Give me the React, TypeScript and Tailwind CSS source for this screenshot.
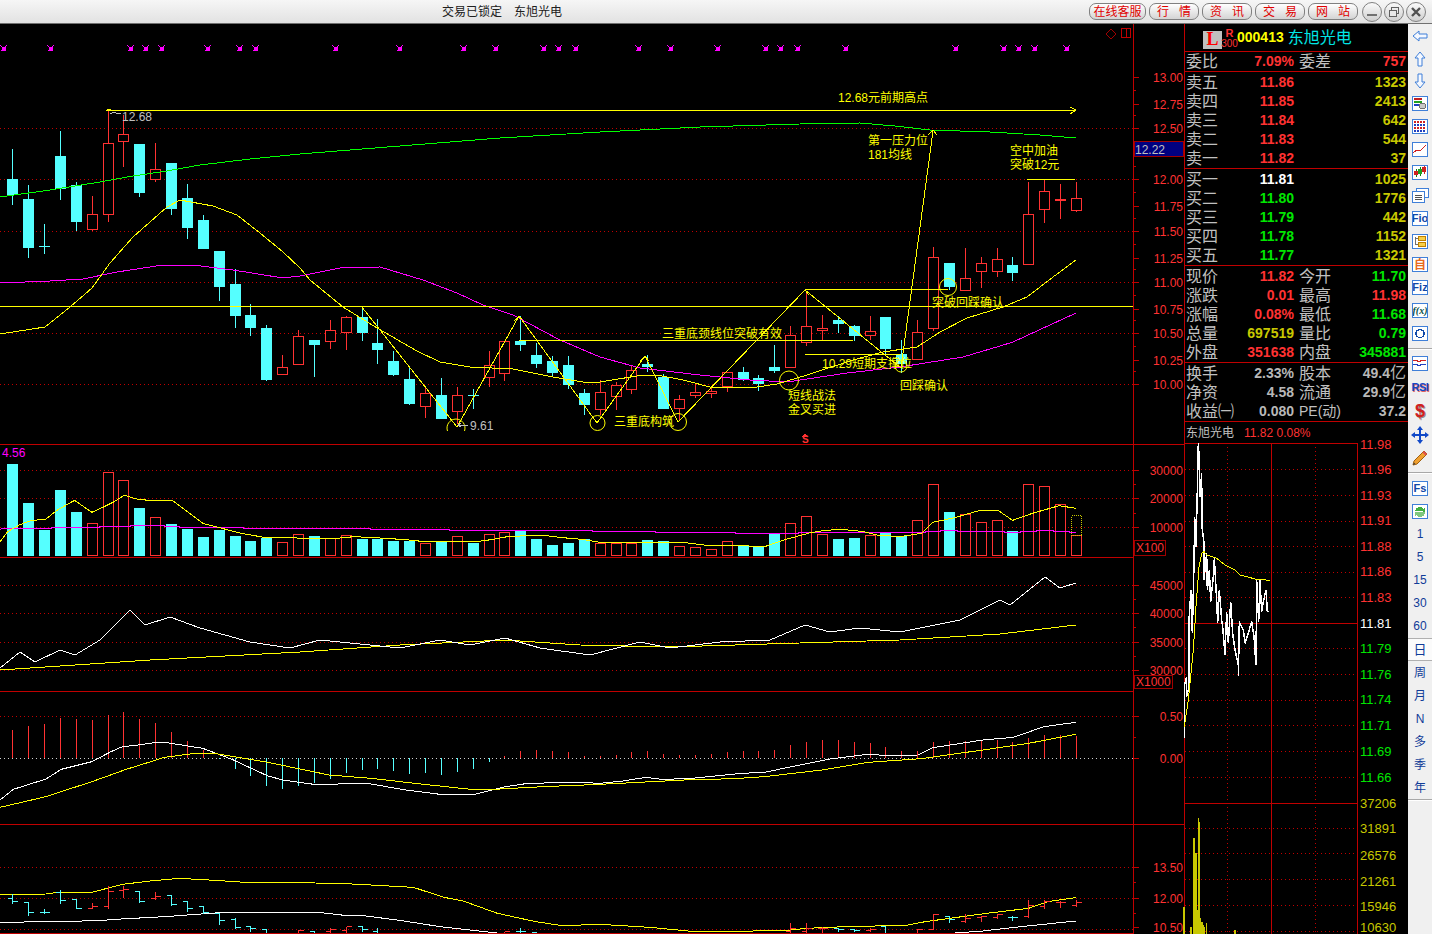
import type { ReactNode } from "react";

type Pt = number[];

const RED = "fill-[#ff3232]";
const YEL = "fill-[#ffff00]";
const GRAY = "fill-[#c0c0c0]";
const GREEN = "fill-[#00e600]";
const OLIVE = "fill-[#c8c800]";
const WHITE = "fill-[#ffffff]";
const MAG = "fill-[#ff00ff]";

const LINE_RED = "#c00000";
const CYAN = "#55ffff";
const CANDLE_RED = "#ff3232";

const X = (i: number) => Math.round(12.3 + 15.876 * i);
// points were read off 3x crops, so map them back to page pixels
const z = (pts: Pt[], ox: number, oy: number, sx = 3) =>
  pts.map(([a, b]) => [ox + a / sx, oy + b / 3]);
const S2 = 2.613;

// top, bottom, high, low, colour
const candles: [number, number, number, number, "c" | "r"][] = [
  [179, 195, 149, 205, "c"], [199, 248, 185, 258, "c"], [246, 247, 224, 254, "c"], [156, 189, 131, 200, "c"],
  [185, 222, 182, 231, "c"], [214, 230, 196, 231, "r"], [143, 215, 110, 222, "r"], [134, 142, 115, 167, "r"],
  [144, 193, 144, 197, "c"], [169, 180, 143, 182, "r"], [163, 209, 163, 215, "c"], [198, 228, 184, 239, "c"],
  [220, 249, 215, 249, "c"], [251, 287, 251, 301, "c"], [284, 316, 269, 328, "c"], [315, 328, 304, 336, "c"],
  [328, 380, 325, 381, "c"], [367, 375, 355, 375, "r"], [336, 365, 330, 365, "r"], [340, 345, 340, 377, "c"],
  [330, 342, 320, 349, "r"], [317, 333, 316, 350, "r"], [317, 333, 306, 341, "c"], [343, 350, 319, 364, "c"],
  [361, 375, 351, 376, "c"], [379, 404, 367, 405, "c"], [393, 407, 387, 418, "r"], [395, 419, 378, 419, "c"],
  [395, 412, 387, 424, "r"], [395, 396, 389, 409, "c"], [365, 378, 351, 387, "r"], [341, 374, 341, 381, "r"],
  [341, 345, 316, 351, "c"], [355, 364, 343, 368, "c"], [361, 373, 356, 376, "c"], [365, 385, 356, 389, "c"],
  [393, 405, 389, 415, "c"], [392, 410, 380, 415, "r"], [385, 397, 382, 410, "r"], [370, 390, 365, 394, "r"],
  [364, 367, 355, 372, "c"], [377, 409, 374, 409, "c"], [399, 409, 395, 420, "r"], [392, 396, 383, 398, "r"],
  [391, 394, 386, 398, "r"], [372, 387, 372, 392, "r"], [372, 380, 367, 381, "c"], [378, 384, 375, 391, "c"],
  [367, 371, 345, 373, "c"], [335, 368, 326, 368, "r"], [326, 343, 291, 346, "r"], [328, 331, 315, 340, "r"],
  [320, 324, 316, 333, "c"], [326, 336, 325, 341, "c"], [331, 336, 316, 340, "r"], [317, 349, 317, 355, "c"],
  [354, 364, 340, 373, "c"], [332, 360, 320, 360, "r"], [257, 329, 247, 331, "r"], [263, 287, 263, 290, "c"],
  [278, 291, 248, 291, "r"], [263, 272, 257, 288, "r"], [259, 272, 248, 277, "r"], [265, 273, 257, 281, "c"],
  [214, 265, 182, 265, "r"], [191, 210, 180, 223, "r"], [199, 201, 184, 219, "r"], [198, 211, 182, 212, "r"],
];

const volTops = [
  464, 503, 530, 490, 512, 523, 472, 480, 508, 517, 524, 529, 537, 530, 536, 541, 538, 542, 534, 536, 538, 535, 539,
  539, 541, 541, 543, 542, 536, 543, 534, 532, 531, 539, 545, 543, 539, 543, 543, 543, 540, 541, 546, 547, 549, 541,
  545, 546, 534, 523, 516, 534, 539, 538, 535, 533, 536, 520, 484, 512, 514, 522, 520, 531, 484, 486, 504, 535,
];
const volRed = new Set([5, 6, 7, 9, 17, 18, 20, 21, 26, 28, 30, 31, 37, 38, 39, 42, 43, 44, 45, 49, 50, 51, 54, 57, 58, 60, 61, 62, 64, 65, 66, 67]);

const green: Pt[] = [[0, 197], [50, 190], [100, 182], [133, 176], [167, 171], [200, 165], [250, 159], [300, 154], [400, 146], [500, 138], [600, 132], [700, 127], [800, 124], [860, 123], [895, 126], [930, 130], [990, 132], [1040, 135], [1076, 138]];
const maYellow: Pt[] = [[0, 334], [45, 327], [70, 307], [92, 288], [110, 263], [133, 237], [167, 207], [180, 200], [213, 206], [237, 215], [260, 233], [283, 252], [300, 268], [310, 280], [343, 307], [377, 328], [417, 351], [440, 362], [470, 367], [513, 369], [553, 377], [583, 382], [600, 382], [643, 375], [657, 375], [683, 380], [710, 387], [757, 387], [777, 384], [807, 375], [853, 360], [883, 352], [917, 347], [940, 332], [967, 318], [1003, 307], [1027, 297], [1053, 277], [1076, 260]];
const maMagenta: Pt[] = [[0, 283], [50, 281], [83, 279], [117, 272], [163, 265], [193, 265], [233, 270], [283, 278], [300, 276], [340, 268], [380, 267], [423, 280], [457, 293], [483, 305], [513, 315], [560, 340], [600, 357], [640, 368], [700, 375], [750, 380], [787, 382], [847, 373], [900, 367], [963, 357], [1000, 346], [1013, 342], [1076, 313]];
const zigzag: Pt[] = [[361, 306], [457, 427], [519, 316], [597, 423], [645, 356], [678, 422], [805, 290], [901, 368], [933, 131]];
const marks = [3, 50, 130, 145, 161, 207, 239, 255, 335, 399, 463, 495, 543, 558, 575, 638, 670, 717, 765, 780, 797, 845, 955, 1003, 1018, 1034, 1066];

const volYellow: Pt[] = [
  ...z([[0, 305], [20, 275], [50, 255], [80, 242], [120, 237], [150, 210], [195, 181], [240, 217], [265, 204], [295, 187], [325, 166], [360, 178], [390, 181], [450, 181], [490, 215], [530, 250], [580, 265], [630, 280], [690, 292], [760, 293], [810, 296], [880, 295], [925, 290], [1010, 295], [1080, 301], [1100, 304], [1250, 304], [1290, 298], [1330, 289], [1420, 286], [1470, 293], [1520, 298], [1568, 307]], 0, 440, S2),
  ...z([[100, 307], [145, 307], [230, 309], [280, 316], [350, 316], [430, 320], [480, 300], [550, 278], [590, 271], [630, 268], [690, 275], [730, 287], [790, 289], [840, 280], [870, 247], [930, 232], [990, 212], [1040, 211], [1078, 241], [1130, 220], [1200, 197], [1243, 205]], 600, 440, S2),
];
const volMagenta: Pt[] = [
  ...z([[0, 268], [10, 265], [135, 265], [135, 262], [260, 262], [260, 259], [340, 259], [340, 256], [430, 256], [430, 259], [470, 259], [470, 262], [635, 262], [635, 265], [968, 265], [968, 268], [1175, 268], [1175, 271], [1548, 271], [1548, 274], [1568, 274]], 0, 440, S2),
  ...z([[145, 274], [145, 277], [353, 277], [353, 280], [518, 280], [518, 277], [850, 277], [850, 274], [890, 274], [890, 271], [935, 271], [935, 274], [1058, 274], [1058, 277], [1100, 277], [1100, 274], [1140, 274], [1140, 271], [1185, 271], [1185, 274], [1228, 274], [1228, 277], [1243, 277]], 600, 440, S2),
];

const obvWhite: Pt[] = [[0, 668], [20, 652], [35, 662], [60, 650], [75, 655], [100, 640], [130, 610], [145, 625], [170, 617], [200, 628], [250, 642], [290, 648], [320, 640], [340, 642], [400, 648], [440, 640], [470, 645], [505, 638], [540, 648], [590, 655], [640, 642], [670, 648], [720, 642], [770, 640], [805, 625], [830, 632], [860, 628], [900, 632], [960, 620], [1000, 600], [1010, 605], [1045, 577], [1060, 588], [1076, 583]];
const obvYellow: Pt[] = [[0, 670], [150, 660], [300, 652], [400, 645], [505, 640], [580, 645], [670, 647], [800, 643], [900, 640], [1000, 634], [1076, 625]];

const macdBars = [730, 726, 724, 718, 719, 720, 715, 712, 719, 723, 732, 741, 750, 759, 769, 776, 786, 789, 786, 783, 779, 773, 770, 769, 771, 774, 773, 775, 772, 769, 762, 756, 751, 750, 751, 752, 756, 756, 755, 752, 751, 754, 755, 755, 754, 752, 751, 751, 750, 745, 742, 740, 740, 742, 743, 747, 751, 751, 742, 741, 741, 740, 740, 742, 738, 735, 735, 736];
const dif: Pt[] = [
  ...z([[0, 300], [35, 268], [120, 237], [160, 208], [240, 185], [290, 155], [320, 140], [360, 135], [410, 127], [430, 127], [530, 145], [610, 180], [700, 228], [740, 240], [820, 253], [880, 253], [890, 250], [960, 250], [1060, 270], [1150, 283], [1240, 283], [1320, 260], [1380, 250], [1510, 247], [1568, 250]], 0, 700, S2),
  ...z([[60, 243], [120, 232], [160, 238], [230, 236], [370, 220], [430, 217], [500, 200], [600, 177], [700, 163], [770, 168], [830, 165], [870, 143], [1000, 120], [1080, 112], [1160, 80], [1243, 67]], 600, 700, S2),
];
const dea: Pt[] = [
  ...z([[0, 322], [120, 290], [240, 245], [330, 208], [430, 172], [510, 160], [560, 160], [700, 187], [860, 225], [970, 235], [1100, 252], [1230, 268], [1290, 268], [1420, 260], [1568, 253]], 0, 700, S2),
  ...z([[220, 240], [350, 236], [430, 230], [580, 210], [700, 187], [840, 176], [1000, 150], [1120, 130], [1243, 103]], 600, 700, S2),
];
const lowYellow: Pt[] = [
  ...z([[0, 585], [120, 582], [150, 577], [240, 577], [320, 553], [400, 542], [470, 535], [560, 541], [640, 547], [760, 547], [920, 552], [1080, 562], [1160, 592], [1210, 603], [1300, 640], [1400, 665], [1470, 677], [1568, 673]], 0, 700, S2),
  ...z([[130, 682], [230, 693], [400, 693], [500, 690], [540, 685], [640, 680], [800, 676], [850, 665], [1010, 640], [1120, 625], [1170, 605], [1243, 593]], 600, 700, S2),
];
const lowWhite: Pt[] = z([[0, 667], [130, 665], [260, 662], [300, 658], [430, 650], [550, 640], [590, 637], [830, 637], [900, 646], [950, 647], [1050, 662], [1150, 680], [1290, 698], [1320, 702]], 0, 700, S2);
const lowWhite2: Pt[] = z([[890, 702], [1000, 693], [1100, 680], [1243, 663]], 600, 700, S2);

// index, high, low, open tick, close tick, colour - crop values
const ohlc: [number, number, number, number, number, "c" | "r"][] = [
  [0, 580, 610, 595, 604, "c"], [1, 603, 645, 606, 637, "c"], [2, 625, 640, 637, 637, "c"], [3, 568, 608, 577, 601, "c"],
  [4, 598, 625, 598, 623, "c"], [5, 606, 625, 625, 617, "r"], [6, 555, 623, 617, 574, "r"], [7, 556, 590, 571, 568, "r"],
  [8, 574, 607, 574, 604, "c"], [9, 574, 598, 594, 589, "r"], [10, 586, 616, 586, 613, "c"], [11, 602, 632, 604, 625, "c"],
  [12, 618, 638, 618, 637, "c"], [13, 640, 671, 640, 661, "c"], [14, 652, 685, 657, 680, "c"], [15, 676, 692, 678, 685, "c"],
  [16, 685, 702, 686, 700, "c"], [18, 688, 702, 702, 690, "r"], [19, 694, 702, 694, 698, "c"], [20, 682, 702, 692, 688, "r"],
  [21, 679, 702, 690, 679, "r"], [22, 678, 692, 678, 686, "c"], [23, 682, 702, 694, 700, "c"], [31, 694, 702, 702, 694, "r"],
  [32, 682, 702, 694, 694, "c"], [33, 696, 702, 696, 702, "c"], [49, 665, 702, 694, 685, "r"], [50, 665, 698, 694, 685, "r"],
  [51, 678, 695, 685, 685, "r"], [52, 684, 692, 684, 688, "c"], [53, 686, 692, 686, 690, "c"], [54, 682, 692, 690, 686, "r"],
  [55, 678, 702, 678, 702, "c"], [56, 698, 702, 698, 702, "c"], [57, 683, 702, 702, 686, "r"], [58, 640, 688, 686, 643, "r"],
  [59, 646, 665, 647, 658, "c"], [60, 640, 665, 664, 655, "r"], [61, 645, 662, 650, 648, "r"], [62, 640, 655, 652, 643, "r"],
  [63, 645, 660, 652, 652, "c"], [64, 597, 650, 648, 615, "r"], [65, 598, 623, 617, 602, "r"], [66, 600, 620, 606, 606, "r"],
  [67, 596, 617, 615, 607, "r"],
];

const dayPrice: Pt[] = z([[13, 955], [13, 795], [20, 770], [20, 830], [27, 800], [27, 600], [33, 510], [37, 640], [42, 430], [44, 290], [48, 380], [52, 210], [55, 70], [58, 120], [60, 230], [65, 160], [66, 320], [72, 370], [72, 480], [80, 400], [82, 510], [88, 450], [92, 545], [100, 470], [103, 415], [110, 540], [113, 610], [118, 510], [125, 600], [128, 620], [135, 705], [140, 575], [145, 670], [152, 545], [158, 640], [165, 690], [175, 735], [175, 768], [178, 608], [190, 630], [195, 670], [205, 640], [215, 605], [222, 650], [228, 735], [230, 480], [236, 605], [240, 480], [245, 575], [250, 545], [258, 510], [262, 575], [268, 575]], 1180, 420);
const dayAvg: Pt[] = z([[13, 920], [25, 840], [33, 760], [40, 690], [48, 560], [57, 440], [65, 400], [72, 395], [80, 405], [110, 415], [135, 435], [165, 450], [180, 465], [230, 478], [270, 481]], 1180, 420);
const dayVol: Pt[] = z([[12, 1460], [33, 1520], [42, 1255], [45, 1470], [48, 1300], [52, 1470], [55, 1195], [58, 1205], [62, 1495], [66, 1505], [70, 1515], [74, 1520], [80, 1510], [165, 1530]], 1180, 420);

const pts = (p: Pt[]) => p.map(([a, b]) => `${a},${b}`).join(" ");

function Line({ p, c, w = 1 }: { p: Pt[]; c: string; w?: number }) {
  return <polyline points={pts(p)} fill="none" stroke={c} strokeWidth={w} />;
}

function HL({ y, a = 0, b = 1133, c = "#ffff00" }: { y: number; a?: number; b?: number; c?: string }) {
  return <line x1={a} x2={b} y1={y + 0.5} y2={y + 0.5} stroke={c} />;
}

function Dots({ y, a = 0, b = 1133, c = "#c00000" }: { y: number; a?: number; b?: number; c?: string }) {
  return <line x1={a} x2={b} y1={y + 0.5} y2={y + 0.5} stroke={c} strokeDasharray="1 3" />;
}

function T({ x, y, c, end, size = "text-[12px]", children }: { x: number; y: number; c: string; end?: boolean; size?: string; children: ReactNode }) {
  return (
    <text x={x} y={y + 1} textAnchor={end ? "end" : "start"} dominantBaseline="central" className={`${c} ${size}`}>
      {children}
    </text>
  );
}

function Axis({ labels, minor = [] }: { labels: [string, number][]; minor?: number[] }) {
  return (
    <>
      {labels.map(([t, y]) => (
        <line key={t} x1={1133} x2={1139} y1={y + 0.5} y2={y + 0.5} stroke={LINE_RED} />
      ))}
      {minor.map((y) => (
        <line key={y} x1={1133} x2={1136} y1={y + 0.5} y2={y + 0.5} stroke={LINE_RED} />
      ))}
      {labels.map(([t, y]) => (
        <T key={t} x={1183} y={y} c={RED} end>
          {t}
        </T>
      ))}
    </>
  );
}

function Pane({ top, height, lineEnd = 1133, children }: { top: number; height: number; lineEnd?: number; children: ReactNode }) {
  const bottom = top + height - 0.5;
  return (
    <svg width={1185} height={height} viewBox={`0 ${top} 1185 ${height}`} shapeRendering="crispEdges" className="block">
      {children}
      <line x1={1133.5} x2={1133.5} y1={top} y2={top + height} stroke={LINE_RED} />
      <line x1={1184.5} x2={1184.5} y1={top} y2={top + height} stroke={LINE_RED} />
      <line x1={0} x2={lineEnd} y1={bottom} y2={bottom} stroke={LINE_RED} />
    </svg>
  );
}

function Chevron({ x, y }: { x: number; y: number }) {
  return <polyline points={`${x - 5},${y + 5} ${x},${y} ${x + 4},${y + 5}`} fill="none" stroke="#ffff00" />;
}

function MainPane() {
  return (
    <Pane top={24} height={421} lineEnd={1185}>
      {[128, 179, 231, 282, 333, 384].map((y) => (
        <Dots key={y} y={y} />
      ))}
      {marks.map((x) => (
        <g key={x} stroke="#ff00ff">
          <line x1={x - 2.5} x2={x + 3.5} y1={45.5} y2={51.5} />
          <line x1={x + 3.5} x2={x - 2.5} y1={45.5} y2={51.5} />
          <rect x={x - 1} y={47} width={3} height={3} fill="#ff00ff" />
        </g>
      ))}
      <polygon points="1106,34 1111,29 1116,34 1111,39" fill="none" stroke="#a00000" />
      <rect x={1121.5} y={28.5} width={9} height={9} fill="none" stroke="#c00000" />
      <line x1={1126.5} x2={1126.5} y1={28} y2={38} stroke="#c00000" />

      {candles.map(([top, bottom, hi, lo, kind], i) => {
        const x = X(i);
        const stroke = kind === "c" ? CYAN : CANDLE_RED;
        return (
          <g key={i}>
            <line x1={x + 0.5} x2={x + 0.5} y1={hi} y2={lo} stroke={stroke} />
            {kind === "c" ? (
              <rect x={x - 5} y={top} width={11} height={bottom - top} fill={CYAN} />
            ) : (
              <rect x={x - 4.5} y={top + 0.5} width={10} height={bottom - top - 1} fill="#000" stroke={CANDLE_RED} />
            )}
          </g>
        );
      })}

      <Line p={green} c="#00ff00" />
      <Line p={maMagenta} c="#ff00ff" />
      <Line p={maYellow} c="#ffff00" />
      <HL y={306} />
      <HL y={110} a={106} b={1076} />
      <polyline points="1070,107 1076,110 1070,114" fill="none" stroke="#ffff00" />
      <rect x={107} y={109} width={4} height={2} fill="#ffff00" />
      <Line p={zigzag} c="#ffff00" />
      <HL y={340} a={519} b={853} />
      <HL y={289} a={805} b={948} />
      <HL y={387} a={720} b={757} />
      <HL y={354} a={805} b={900} />
      <HL y={179} a={1027} b={1075} />
      <Chevron x={519} y={316} />
      <Chevron x={645} y={356} />
      <Chevron x={805} y={290} />
      <Chevron x={933} y={130} />

      <g fill="none" stroke="#ffff00" shapeRendering="auto">
        <path d="M447.5 431 A9 9 0 1 1 464.5 431" />
        <circle cx={597.5} cy={423} r={7.5} />
        <circle cx={678} cy={422} r={8.5} />
        <circle cx={789} cy={380.5} r={9.5} />
        <circle cx={948} cy={287} r={8.5} />
        <circle cx={901} cy={366} r={6} />
      </g>

      <T x={838} y={97} c={YEL}>12.68元前期高点</T>
      <T x={122} y={116} c={GRAY}>12.68</T>
      <polyline points="110,114 114,112 118,114 121,113" fill="none" stroke="#c0c0c0" />
      <T x={470} y={425} c={GRAY}>9.61</T>
      <polyline points="461,423 458,425 461,427" fill="none" stroke="#c0c0c0" />
      <line x1={459} x2={468} y1={425.5} y2={425.5} stroke="#c0c0c0" />
      <T x={868} y={140} c={YEL}>第一压力位</T>
      <T x={868} y={154} c={YEL}>181均线</T>
      <T x={1010} y={150} c={YEL}>空中加油</T>
      <T x={1010} y={164} c={YEL}>突破12元</T>
      <T x={662} y={333} c={YEL}>三重底颈线位突破有效</T>
      <T x={822} y={363} c={YEL}>10.29短期支撑位</T>
      <T x={932} y={302} c={YEL}>突破回踩确认</T>
      <T x={614} y={421} c={YEL}>三重底构筑</T>
      <T x={788} y={395} c={YEL}>短线战法</T>
      <T x={788} y={409} c={YEL}>金叉买进</T>
      <T x={900} y={385} c={YEL}>回踩确认</T>
      <polygon points="802,437 805,433 808,437" fill="#ff3232" />
      <T x={802} y={438} c={RED} size="text-[10px] font-bold">S</T>

      <Axis
        labels={[["13.00", 77], ["12.75", 104], ["12.50", 128], ["12.00", 179], ["11.75", 206], ["11.50", 231], ["11.25", 258], ["11.00", 282], ["10.75", 309], ["10.50", 333], ["10.25", 360], ["10.00", 384]]}
        minor={[90, 115, 141, 166, 192, 218, 244, 269, 295, 320, 346, 371]}
      />
      <rect x={1134.5} y={141.5} width={49} height={15} fill="#000080" stroke="#a00000" />
      <T x={1135} y={149} c={GRAY}>12.22</T>
    </Pane>
  );
}

function VolumePane() {
  return (
    <Pane top={445} height={113}>
      {[470, 498, 527].map((y) => (
        <Dots key={y} y={y} />
      ))}
      <T x={2} y={452} c={MAG}>4.56</T>
      {volTops.map((top, i) =>
        volRed.has(i) ? (
          <rect key={i} x={X(i) - 4.5} y={top + 0.5} width={10} height={555 - top} fill="#000" stroke={CANDLE_RED} />
        ) : (
          <rect key={i} x={X(i) - 5} y={top} width={11} height={556 - top} fill={CYAN} />
        ),
      )}
      <rect x={1071.5} y={515.5} width={10} height={20} fill="none" stroke="#c8c800" strokeDasharray="1 1" />
      <Line p={volMagenta} c="#ff00ff" />
      <Line p={volYellow} c="#ffff00" />
      <Axis labels={[["30000", 470], ["20000", 498], ["10000", 527]]} minor={[484, 513]} />
      <rect x={1134.5} y={540.5} width={31} height={15} fill="none" stroke="#a00000" />
      <T x={1136} y={547} c={RED}>X100</T>
    </Pane>
  );
}

function ObvPane() {
  return (
    <Pane top={558} height={134}>
      {[585, 613, 642, 670].map((y) => (
        <Dots key={y} y={y} />
      ))}
      <Line p={obvYellow} c="#ffff00" />
      <Line p={obvWhite} c="#ffffff" />
      <Axis labels={[["45000", 585], ["40000", 613], ["35000", 642], ["30000", 670]]} minor={[599, 627, 656]} />
      <rect x={1134.5} y={675.5} width={38} height={13} fill="#000" stroke="#a00000" />
      <T x={1136} y={681} c={RED}>X1000</T>
    </Pane>
  );
}

function MacdPane() {
  return (
    <Pane top={692} height={133} lineEnd={1185}>
      <Dots y={716} />
      <Dots y={758} a={0} b={1133} c="#d0d0d0" />
      {macdBars.map((top, i) => (
        <line key={i} x1={X(i) + 0.5} x2={X(i) + 0.5} y1={top} y2={758} stroke={top < 758 ? CANDLE_RED : CYAN} />
      ))}
      <Line p={dif} c="#ffffff" />
      <Line p={dea} c="#ffff00" />
      <Axis labels={[["0.50", 716], ["0.00", 758]]} minor={[737]} />
    </Pane>
  );
}

function BottomPane() {
  return (
    <Pane top={825} height={109}>
      {[867, 898, 929].map((y) => (
        <Dots key={y} y={y} />
      ))}
      <Line p={lowYellow} c="#ffff00" />
      <Line p={lowWhite} c="#ffffff" />
      <Line p={lowWhite2} c="#ffffff" />
      {ohlc.map(([i, hi, lo, open, close, kind]) => {
        const x = X(i) + 0.5;
        const c = kind === "c" ? CYAN : CANDLE_RED;
        const y = (v: number) => Math.round(700 + v / 3) + 0.5;
        return (
          <g key={i} stroke={c}>
            <line x1={x} x2={x} y1={y(hi)} y2={y(lo)} />
            <line x1={x - 5} x2={x} y1={y(open)} y2={y(open)} />
            <line x1={x} x2={x + 5} y1={y(close)} y2={y(close)} />
          </g>
        );
      })}
      <Axis labels={[["13.50", 867], ["12.00", 898], ["10.50", 927]]} minor={[882, 913]} />
    </Pane>
  );
}

function IntradayChart() {
  const dotted = [469, 495, 521, 546, 572, 597, 648, 674, 700, 725, 751, 777, 828, 853, 879, 905, 931];
  const labels: [string, number, string][] = [
    ["11.98", 443, RED], ["11.96", 468, RED], ["11.93", 494, RED], ["11.91", 519, RED], ["11.88", 545, RED],
    ["11.86", 570, RED], ["11.83", 596, RED], ["11.81", 622, WHITE], ["11.79", 647, GREEN], ["11.76", 673, GREEN],
    ["11.74", 698, GREEN], ["11.71", 724, GREEN], ["11.69", 750, GREEN], ["11.66", 776, GREEN], ["37206", 802, OLIVE],
    ["31891", 827, OLIVE], ["26576", 854, OLIVE], ["21261", 880, OLIVE], ["15946", 905, OLIVE], ["10630", 926, OLIVE],
  ];
  return (
    <svg width={223} height={491} viewBox="1185 443 223 491" shapeRendering="crispEdges" className="block overflow-visible">
      {dotted.map((y) => (
        <Dots key={y} y={y} a={1185} b={1357} />
      ))}
      {[1227, 1315].map((x) => (
        <line key={x} x1={x + 0.5} x2={x + 0.5} y1={443} y2={934} stroke="#c00000" strokeDasharray="1 3" />
      ))}
      <line x1={1185} x2={1357} y1={443.5} y2={443.5} stroke={LINE_RED} />
      <line x1={1185} x2={1357} y1={623.5} y2={623.5} stroke={LINE_RED} />
      <line x1={1185} x2={1357} y1={803.5} y2={803.5} stroke={LINE_RED} />
      <line x1={1271.5} x2={1271.5} y1={443} y2={934} stroke={LINE_RED} />
      <line x1={1357.5} x2={1357.5} y1={443} y2={934} stroke={LINE_RED} />
      {dayVol.map(([x, y]) => (
        <line key={x} x1={x} x2={x} y1={y} y2={934} stroke="#c8c800" strokeWidth={1.5} />
      ))}
      <Line p={dayPrice} c="#ffffff" w={1.5} />
      <Line p={dayAvg} c="#ffff00" />
      {labels.map(([t, y, c]) => (
        <T key={t} x={1360} y={y} c={c} size="text-[13px]">
          {t}
        </T>
      ))}
    </svg>
  );
}

const cRed = "text-[#ff3232]";
const cGreen = "text-[#00e600]";
const cOlive = "text-[#c8c800]";
const cWhite = "text-[#ffffff]";
const cGray = "text-[#b8b8b8]";

function Row({ l, v, vc, l2, v2, v2c }: { l: ReactNode; v: ReactNode; vc: string; l2?: ReactNode; v2: ReactNode; v2c: string }) {
  return (
    <div className="flex h-[19px] items-center leading-[19px]">
      <span className="w-[36px] shrink-0 whitespace-nowrap pl-[1px] text-[16px] text-[#c0c0c0]">{l}</span>
      <span className={`w-[73px] shrink-0 text-right text-[14px] font-bold ${vc}`}>{v}</span>
      <span className="ml-[5px] w-[48px] shrink-0 whitespace-nowrap text-[16px] text-[#c0c0c0]">{l2}</span>
      <span className={`flex-1 pr-[2px] text-right text-[14px] font-bold whitespace-nowrap ${v2c}`}>{v2}</span>
    </div>
  );
}

function QuotePanel() {
  const sell = [["卖五", "11.86", "1323"], ["卖四", "11.85", "2413"], ["卖三", "11.84", "642"], ["卖二", "11.83", "544"], ["卖一", "11.82", "37"]];
  const buy = [["买一", "11.81", "1025"], ["买二", "11.80", "1776"], ["买三", "11.79", "442"], ["买四", "11.78", "1152"], ["买五", "11.77", "1321"]];
  return (
    <div className="flex w-[223px] flex-col">
      <div className="flex h-[28px] items-center border-b border-[#c00000] pl-[18px]">
        <span className="mt-[4px] flex h-[18px] w-[19px] items-center justify-center bg-[#c0c0c0] font-['Liberation_Serif',serif] text-[18px] font-bold text-[#ff0000]">L</span>
        <span className="flex w-[15px] flex-col items-center text-[#ff3232]">
          <span className="text-[11px] leading-[11px] font-bold">R</span>
          <span className="text-[10px] leading-[9px]">300</span>
        </span>
        <span className="text-[14px] font-bold text-[#ffff00]">000413</span>
        <span className="ml-[4px] text-[16px] text-[#00e6e6]">东旭光电</span>
      </div>
      <div className="border-b border-[#c00000]">
        <Row l="委比" v="7.09%" vc={cRed} l2="委差" v2="757" v2c={cRed} />
      </div>
      <div className="border-b border-[#c00000] py-[0.5px]">
        {sell.map(([l, p, q]) => (
          <Row key={l} l={l} v={p} vc={cRed} v2={q} v2c={cOlive} />
        ))}
      </div>
      <div className="border-b border-[#c00000] py-[0.5px]">
        {buy.map(([l, p, q], i) => (
          <Row key={l} l={l} v={p} vc={i === 0 ? cWhite : cGreen} v2={q} v2c={cOlive} />
        ))}
      </div>
      <div className="border-b border-[#c00000] py-[0.5px]">
        <Row l="现价" v="11.82" vc={cRed} l2="今开" v2="11.70" v2c={cGreen} />
        <Row l="涨跌" v="0.01" vc={cRed} l2="最高" v2="11.98" v2c={cRed} />
        <Row l="涨幅" v="0.08%" vc={cRed} l2="最低" v2="11.68" v2c={cGreen} />
        <Row l="总量" v="697519" vc={cOlive} l2="量比" v2="0.79" v2c={cGreen} />
        <Row l="外盘" v="351638" vc={cRed} l2="内盘" v2="345881" v2c={cGreen} />
      </div>
      <div className="border-b border-[#c00000] py-[0.5px]">
        <Row l="换手" v="2.33%" vc={cGray} l2="股本" v2={<>49.4<span className="text-[16px] font-normal">亿</span></>} v2c={cGray} />
        <Row l="净资" v="4.58" vc={cGray} l2="流通" v2={<>29.9<span className="text-[16px] font-normal">亿</span></>} v2c={cGray} />
        <Row l="收益㈠" v="0.080" vc={cGray} l2={<span className="text-[14px]">PE(动)</span>} v2="37.2" v2c={cGray} />
      </div>
      <div className="flex h-[21px] items-center gap-[10px] pl-[1px] text-[12px] leading-none whitespace-nowrap">
        <span className="text-[#c0c0c0]">东旭光电</span>
        <span className="text-[#ff3232]">11.82 0.08%</span>
      </div>
      <IntradayChart />
    </div>
  );
}

function Tile({ children }: { children: ReactNode }) {
  return (
    <span className="flex h-[15px] w-[16px] items-center justify-center overflow-hidden border border-[#3f7fd8] bg-white text-[11px] leading-none font-bold text-[#1048a8]">
      {children}
    </span>
  );
}

function Arrow({ d }: { d: string }) {
  return (
    <svg width={18} height={18} viewBox="0 0 18 18">
      <path d={d} fill="#f4f8ff" stroke="#3f7fd8" strokeWidth={1} />
    </svg>
  );
}

function Mini({ children }: { children: ReactNode }) {
  return (
    <svg width={14} height={13} viewBox="0 0 14 13" shapeRendering="crispEdges">
      {children}
    </svg>
  );
}

function ToolSlot({ h = "h-[23px]", children, active }: { h?: string; children: ReactNode; active?: boolean }) {
  return (
    <div className={`flex w-[24px] items-center justify-center ${h} ${active ? "border-y border-[#b0b0b0] bg-[#fbfbfb]" : ""}`}>
      {children}
    </div>
  );
}

function Sep({ h }: { h: string }) {
  return (
    <div className={`flex w-[24px] items-center ${h}`}>
      <div className="h-[2px] w-full border-t border-[#a8a8a8] bg-white" />
    </div>
  );
}

function Toolbar() {
  const periods = ["1", "5", "15", "30", "60"];
  const after = ["周", "月", "N", "多", "季", "年"];
  return (
    <div className="flex w-[24px] flex-col bg-[#f0f0f0] text-[12px] leading-none text-[#103c98]">
      <ToolSlot><Arrow d="M2 9 L8 4 V7 H16 V11 H8 V14 Z" /></ToolSlot>
      <ToolSlot><Arrow d="M9 2 L14 8 H11 V16 H7 V8 H4 Z" /></ToolSlot>
      <ToolSlot h="h-[22px]"><Arrow d="M9 16 L14 10 H11 V2 H7 V10 H4 Z" /></ToolSlot>
      <ToolSlot>
        <Tile>
          <Mini>
            <rect x={1} y={1} width={8} height={2} fill="#c02020" />
            <rect x={1} y={4} width={8} height={2} fill="#20a020" />
            <rect x={1} y={7} width={5} height={2} fill="#2040c0" />
            <circle cx={9.5} cy={9} r={3} fill="#c8c8c8" stroke="#707070" />
          </Mini>
        </Tile>
      </ToolSlot>
      <ToolSlot>
        <Tile>
          <Mini>
            {[1, 4, 7, 10].map((x) => (
              <g key={x}>
                <rect x={x} y={1} width={2} height={2} fill="#d02020" />
                <rect x={x} y={4} width={2} height={2} fill="#2040c0" />
                <rect x={x} y={7} width={2} height={2} fill="#d02020" />
                <rect x={x} y={10} width={2} height={2} fill="#2040c0" />
              </g>
            ))}
          </Mini>
        </Tile>
      </ToolSlot>
      <ToolSlot>
        <Tile>
          <Mini>
            <polyline points="0,10 4,7 7,8 13,2" fill="none" stroke="#d02020" />
          </Mini>
        </Tile>
      </ToolSlot>
      <ToolSlot>
        <Tile>
          <Mini>
            <line x1={3} x2={3} y1={3} y2={11} stroke="#108010" />
            <rect x={1} y={5} width={4} height={4} fill="#d02020" />
            <line x1={7} x2={7} y1={1} y2={10} stroke="#108010" />
            <rect x={5} y={3} width={4} height={5} fill="#20a020" />
            <line x1={11} x2={11} y1={0} y2={8} stroke="#d02020" />
            <rect x={9} y={1} width={4} height={5} fill="#d02020" />
          </Mini>
        </Tile>
      </ToolSlot>
      <ToolSlot>
        <svg width={17} height={16} viewBox="0 0 17 16" shapeRendering="crispEdges">
          <rect x={4.5} y={0.5} width={12} height={9} fill="#fff" stroke="#3f7fd8" />
          <rect x={0.5} y={3.5} width={12} height={11} fill="#fff" stroke="#3f7fd8" />
          <path d="M3 7H10M3 9H10M3 11H10" stroke="#505050" />
        </svg>
      </ToolSlot>
      <ToolSlot><Tile>Fio</Tile></ToolSlot>
      <ToolSlot>
        <Tile>
          <Mini>
            <rect x={5} y={1} width={7} height={4} fill="#f8d048" stroke="#c08000" />
            <rect x={5} y={7} width={7} height={4} fill="#f8d048" stroke="#c08000" />
            <path d="M2 2V9H5M2 3H5" stroke="#707070" fill="none" />
          </Mini>
        </Tile>
      </ToolSlot>
      <ToolSlot><Tile><span className="text-[12px] text-[#e86a20]">自</span></Tile></ToolSlot>
      <ToolSlot><Tile>Fiz</Tile></ToolSlot>
      <ToolSlot><Tile><span className="font-['Liberation_Serif',serif] text-[10px] text-[#085048] italic">f(x)</span></Tile></ToolSlot>
      <ToolSlot>
        <Tile>
          <Mini>
            <circle cx={7} cy={6.5} r={4} fill="none" stroke="#1048a8" strokeWidth={1.5} />
          </Mini>
        </Tile>
      </ToolSlot>
      <Sep h="h-[7px]" />
      <ToolSlot>
        <Tile>
          <Mini>
            <polyline points="0,4 3,3 6,5 9,3 13,4" fill="none" stroke="#d02020" />
            <polyline points="0,8 3,7 6,9 9,7 13,8" fill="none" stroke="#2040c0" />
          </Mini>
        </Tile>
      </ToolSlot>
      <ToolSlot h="h-[24px]">
        <span className="text-[11px] font-bold tracking-[-0.5px] text-[#1048c8] [text-shadow:1px_1px_0_#e06060]">RSI</span>
      </ToolSlot>
      <ToolSlot h="h-[24px]">
        <span className="text-[18px] font-bold text-[#d02020] [text-shadow:1px_1px_0_#909090]">$</span>
      </ToolSlot>
      <ToolSlot>
        <svg width={18} height={18} viewBox="0 0 18 18">
          <path d="M9 0 L12 4 H10 V8 H14 V6 L18 9 L14 12 V10 H10 V14 H12 L9 18 L6 14 H8 V10 H4 V12 L0 9 L4 6 V8 H8 V4 H6 Z" fill="#1048c8" />
        </svg>
      </ToolSlot>
      <ToolSlot>
        <svg width={18} height={18} viewBox="0 0 18 18">
          <path d="M13 2 L16 5 L6 15 L2 16 L3 12 Z" fill="#f0a030" stroke="#a06010" />
          <path d="M13 2 L16 5 L14.5 6.5 L11.5 3.5 Z" fill="#e05050" />
          <path d="M2 16 L3 13.5 L4.5 15 Z" fill="#404040" />
        </svg>
      </ToolSlot>
      <Sep h="h-[8px]" />
      <ToolSlot><Tile>Fs</Tile></ToolSlot>
      <ToolSlot>
        <Tile>
          <Mini>
            <path d="M2 6 A5 5 0 0 1 11 4 L12 2 L12 7 L8 6 Z" fill="#40b040" />
            <path d="M12 7 A5 5 0 0 1 3 10 L2 11 L2 7 L6 7 Z" fill="#80c880" />
          </Mini>
        </Tile>
      </ToolSlot>
      {periods.map((t) => (
        <ToolSlot key={t}><span className="-mt-[2px]">{t}</span></ToolSlot>
      ))}
      <ToolSlot active>
        <span className="text-[13px]">日</span>
      </ToolSlot>
      {after.map((t) => (
        <ToolSlot key={t}>{t}</ToolSlot>
      ))}
      <Sep h="h-[2px]" />
    </div>
  );
}

function NavButton({ chars }: { chars: string[] }) {
  return (
    <div className={`flex h-[17px] items-center rounded-[7px] border border-[#808080] bg-gradient-to-b from-[#ffffff] to-[#d4d4d4] text-[12px] leading-none text-[#e00000] ${chars.length > 1 ? "w-[50px] justify-between px-[7px]" : "w-[57px] justify-center"}`}>
      {chars.map((c) => (
        <span key={c}>{c}</span>
      ))}
    </div>
  );
}

function WinButton({ children }: { children: ReactNode }) {
  return (
    <div className="flex size-[20px] items-center justify-center rounded-full border border-[#808080] bg-gradient-to-b from-[#fafafa] to-[#cfcfcf]">
      <svg width={12} height={12} viewBox="0 0 12 12" shapeRendering="crispEdges">
        {children}
      </svg>
    </div>
  );
}

function TitleBar() {
  return (
    <div className="flex h-[24px] items-center border-b border-[#707070] bg-gradient-to-b from-[#f6f6f6] to-[#e2e2e2] pl-[442px] text-[12px] leading-none text-[#202020]">
      <span>交易已锁定</span>
      <span className="ml-[12px]">东旭光电</span>
      <div className="ml-auto flex items-center gap-[3px] pr-[6px]">
        <NavButton chars={["在线客服"]} />
        <NavButton chars={["行", "情"]} />
        <NavButton chars={["资", "讯"]} />
        <NavButton chars={["交", "易"]} />
        <NavButton chars={["网", "站"]} />
        <div className="ml-[1px] flex items-center gap-[2px]">
          <WinButton>
            <rect x={1} y={8} width={10} height={2} fill="#707070" />
          </WinButton>
          <WinButton>
            <rect x={3.5} y={1.5} width={7} height={6} fill="none" stroke="#606060" />
            <rect x={1.5} y={4.5} width={7} height={6} fill="#e8e8e8" stroke="#606060" />
          </WinButton>
          <WinButton>
            <path d="M2 2 L10 10 M10 2 L2 10" stroke="#505050" strokeWidth={2.4} shapeRendering="auto" />
          </WinButton>
        </div>
      </div>
    </div>
  );
}

export default function App() {
  return (
    <div className="flex h-[934px] w-[1432px] flex-col overflow-hidden bg-black font-['Liberation_Sans','Noto_Sans_CJK_SC',sans-serif]">
      <TitleBar />
      <div className="flex min-h-0 flex-1">
        <div className="w-[1185px] shrink-0">
          <MainPane />
          <VolumePane />
          <ObvPane />
          <MacdPane />
          <BottomPane />
        </div>
        <QuotePanel />
        <Toolbar />
      </div>
    </div>
  );
}
